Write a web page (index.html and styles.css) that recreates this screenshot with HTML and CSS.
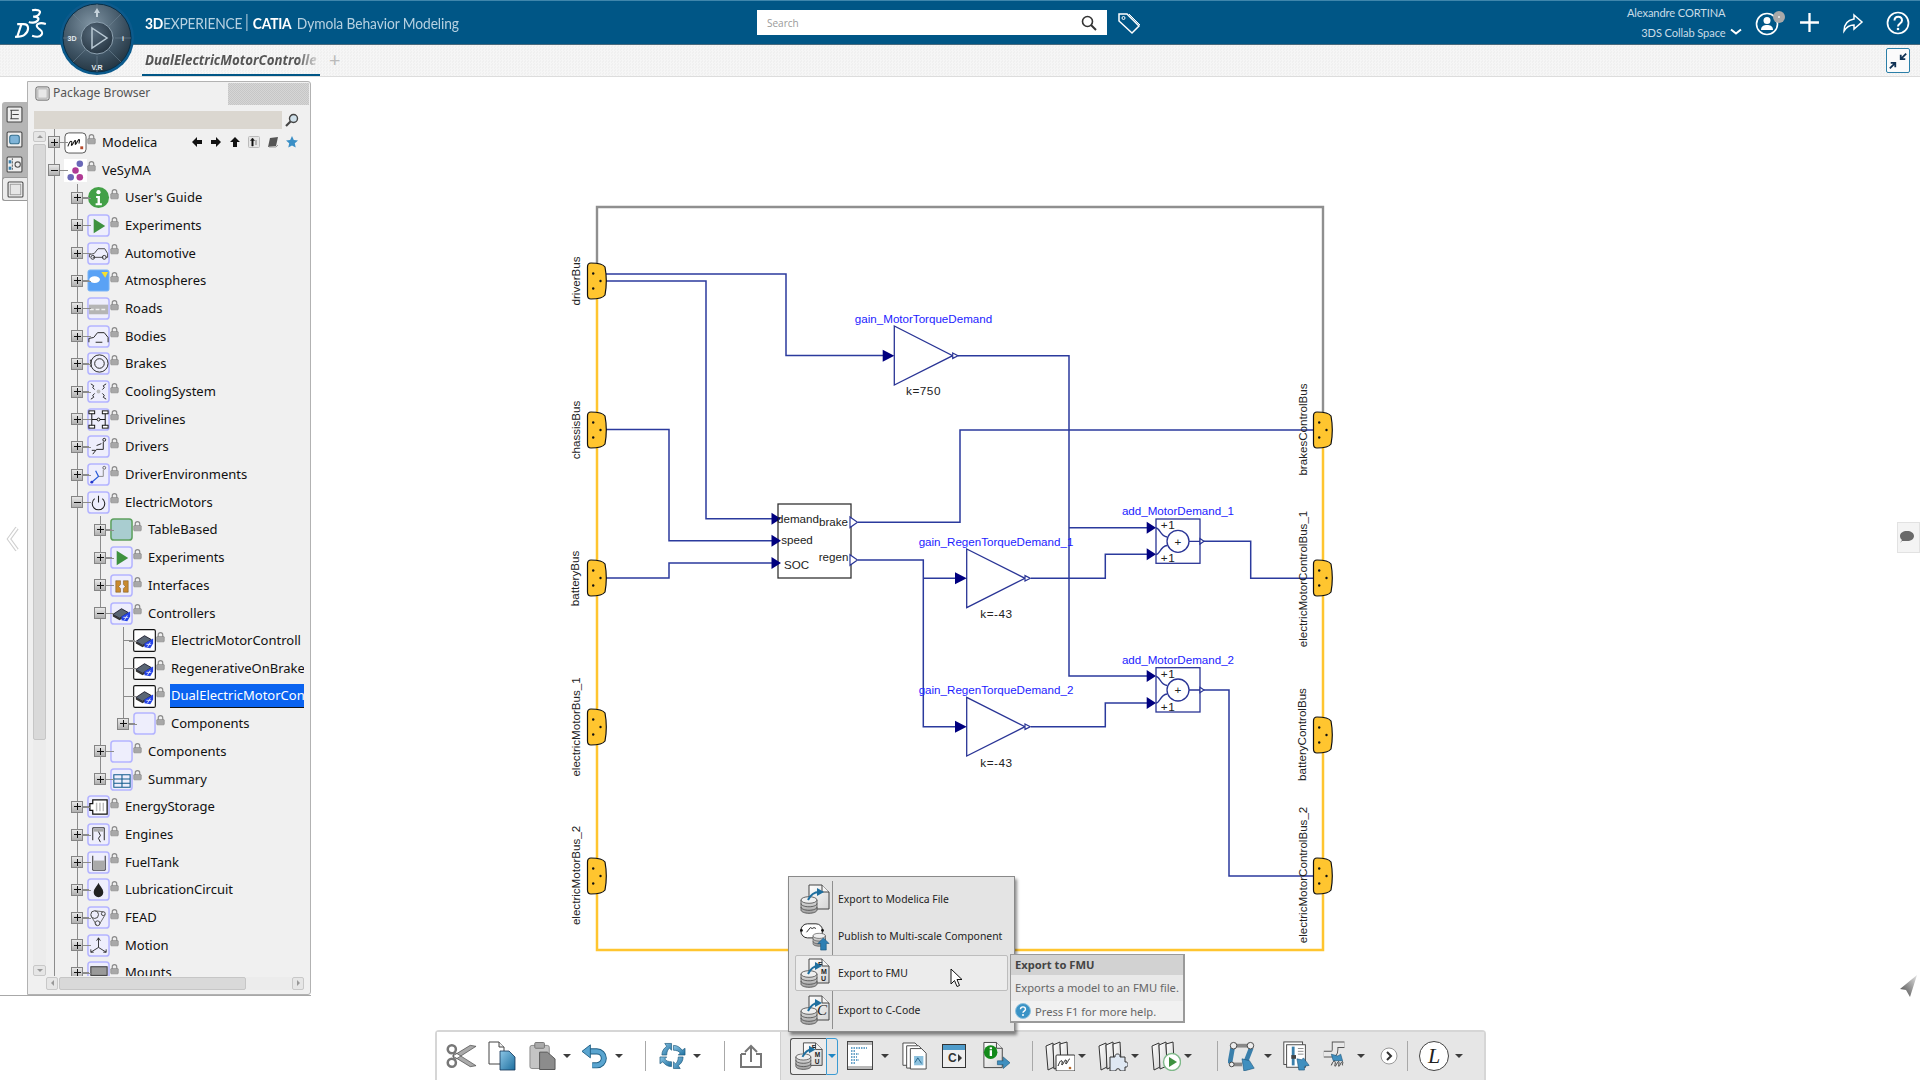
FILE: index.html
```html
<!DOCTYPE html>
<html lang="en">
<head>
<meta charset="utf-8">
<title>3DEXPERIENCE CATIA Dymola Behavior Modeling</title>
<link rel="stylesheet" href="styles.css">
</head>
<body>
<svg class="defs" aria-hidden="true">
<defs>
<linearGradient id="gBlue" x1="0" y1="0" x2="1" y2="1"><stop offset="0" stop-color="#8cc6e6"/><stop offset="1" stop-color="#1d6f9f"/></linearGradient>
<linearGradient id="gGrey" x1="0" y1="0" x2="0" y2="1"><stop offset="0" stop-color="#e2e2e2"/><stop offset="1" stop-color="#a0a0a0"/></linearGradient>
<linearGradient id="gDoc" x1="0" y1="0" x2="1" y2="1"><stop offset="0" stop-color="#fff"/><stop offset="1" stop-color="#d5d5d5"/></linearGradient>
<radialGradient id="gMetal" cx=".42" cy=".3" r=".8"><stop offset="0" stop-color="#7f93a2"/><stop offset=".6" stop-color="#3d5262"/><stop offset="1" stop-color="#1b2b36"/></radialGradient>
<radialGradient id="gHub" cx=".4" cy=".35" r=".8"><stop offset="0" stop-color="#56697a"/><stop offset="1" stop-color="#1f2e3a"/></radialGradient>
<linearGradient id="gTip" x1="1" y1="0" x2="0" y2="1"><stop offset="0" stop-color="#e4e4e4"/><stop offset="1" stop-color="#444"/></linearGradient>

<symbol id="lock" viewBox="0 0 10 12"><path d="M2.5 6V3.6a2.5 2.5 0 0 1 5 0V6" fill="none" stroke="#8a8a8a" stroke-width="1.3"/><rect x=".8" y="5.4" width="8.4" height="6" rx="1" fill="#a8a8a8" stroke="#7d7d7d" stroke-width=".6"/></symbol>
<symbol id="pk" viewBox="0 0 24 24"><rect x="1" y="1" width="22" height="22" rx="3" fill="#eeeefc" stroke="#b4b4ff" stroke-width="1.6"/></symbol>
<symbol id="i-modelica" viewBox="0 0 24 24"><rect x="1" y="2" width="22" height="21" rx="4" fill="#fff" stroke="#555"/><path d="M4 16c2-5 3-6 4-5s-1 4 0 4 3-6 4-5-1 4 0 4 3-6 4-5-1 4 0 4" fill="none" stroke="#111" stroke-width="1.1"/><rect x="17" y="16" width="3" height="3" fill="#b5482a"/></symbol>
<symbol id="i-vesyma" viewBox="0 0 24 24"><rect width="24" height="24" fill="#fff"/><circle cx="16.5" cy="5" r="3.4" fill="#6a68b8"/><circle cx="12" cy="12" r="3.4" fill="#b03a94"/><circle cx="7" cy="19" r="3.4" fill="#6a68b8"/><circle cx="16.5" cy="19" r="3.4" fill="#b03a94"/></symbol>
<symbol id="i-info" viewBox="0 0 24 24"><circle cx="12" cy="12" r="11" fill="#43a047"/><circle cx="12" cy="6.5" r="2.2" fill="#fff"/><path d="M9.5 10.5h4v7.5h2v2h-6.5v-2h2v-5.500h-1.500z" fill="#fff"/></symbol>
<symbol id="i-play" viewBox="0 0 24 24"><use href="#pk"/><path d="M7 5l12 7.500-12 7.500z" fill="#3e9140"/></symbol>
<symbol id="i-car" viewBox="0 0 24 24"><use href="#pk"/><path d="M2.500 16v-3l5-1 4-5h7l3 5v4h-2M6 16h11" fill="none" stroke="#333" stroke-width=".9"/><circle cx="6" cy="16" r="2" fill="none" stroke="#333"/><circle cx="18" cy="16" r="2" fill="none" stroke="#333"/></symbol>
<symbol id="i-atm" viewBox="0 0 24 24"><rect x="1" y="1" width="22" height="22" rx="2" fill="#5aa2f5" stroke="#7fb7f7"/><ellipse cx="8" cy="11" rx="5.500" ry="3.500" fill="#fff"/><path d="M15 3h7l-3 6z" fill="#f4e02e"/></symbol>
<symbol id="i-road" viewBox="0 0 24 24"><use href="#pk"/><rect x="2" y="8" width="20" height="10" fill="#b5b5b5"/><path d="M3 13h18" stroke="#eee" stroke-width="1.500" stroke-dasharray="4 2"/></symbol>
<symbol id="i-body" viewBox="0 0 24 24"><use href="#pk"/><path d="M2 18v-4l5-1 4-5h7l4 5v5M9 18h7" fill="none" stroke="#222" stroke-width="1"/></symbol>
<symbol id="i-brake" viewBox="0 0 24 24"><use href="#pk"/><circle cx="13" cy="12" r="9" fill="none" stroke="#222"/><circle cx="13" cy="12" r="5" fill="none" stroke="#222"/><path d="M4 8v8" stroke="#222" stroke-width="2" stroke-dasharray="1 1"/></symbol>
<symbol id="i-cool" viewBox="0 0 24 24"><use href="#pk"/><path d="M4 4l3 2-1 2 2 2M20 4l-3 2 1 2-2 2M4 20l3-2-1-2 2-2M20 20l-3-2 1-2-2-2" fill="none" stroke="#222"/><circle cx="12" cy="12" r="2" fill="#bbb"/></symbol>
<symbol id="i-drive" viewBox="0 0 24 24"><use href="#pk"/><g fill="#fff" stroke="#111"><rect x="2" y="3" width="6" height="3"/><rect x="16" y="3" width="6" height="3"/><rect x="2" y="18" width="6" height="3"/><rect x="16" y="18" width="6" height="3"/></g><path d="M5 6v12M19 6v12M5 12h14" stroke="#111"/><circle cx="12" cy="12" r="1.500" fill="#fff" stroke="#111"/></symbol>
<symbol id="i-driver" viewBox="0 0 24 24"><use href="#pk"/><circle cx="18" cy="5" r="1.500" fill="none" stroke="#222"/><path d="M17 7v8h-7l-4 5M15 9l-5 2M5 16h4" fill="none" stroke="#222"/></symbol>
<symbol id="i-env" viewBox="0 0 24 24"><use href="#pk"/><circle cx="18" cy="5" r="1.500" fill="none" stroke="#666"/><path d="M17 7v7h-5" fill="none" stroke="#888"/><path d="M9 8l3 6-7 6" fill="none" stroke="#2b5cd8" stroke-width="1.300"/><circle cx="5" cy="20" r="1.500" fill="#2233cc"/></symbol>
<symbol id="i-power" viewBox="0 0 24 24"><use href="#pk"/><path d="M8 8a6.500 6.500 0 1 0 8 0M12 5v7" fill="none" stroke="#222" stroke-width="1.100"/></symbol>
<symbol id="i-table" viewBox="0 0 24 24"><rect x="1" y="1" width="22" height="22" rx="3" fill="#a9cdd0" stroke="#5da05e" stroke-width="1.600"/></symbol>
<symbol id="i-iface" viewBox="0 0 24 24"><use href="#pk"/><path d="M6 7h5v4l-2 2 2 2v4H6zM14 7h5v12h-5v-4l2-2-2-2z" fill="#c98a2f" stroke="#6e4a10" stroke-width=".5"/></symbol>
<symbol id="chip" viewBox="0 0 24 24"><path d="M3 13l9-6 7 4-9 6z" fill="#5a6674" stroke="#223"/><path d="M3 13v2l7 4v-2zM10 17v2l9-6v-2z" fill="#333"/><path d="M12 15l9-5v5l-3 5-6-1z" fill="#2442e6"/><path d="M14 16h5M15 19l3-5" stroke="#fff" stroke-width=".8"/></symbol>
<symbol id="i-ctrl" viewBox="0 0 24 24"><use href="#pk"/><use href="#chip"/></symbol>
<symbol id="i-ctrl2" viewBox="0 0 24 24"><rect x=".7" y=".7" width="22.600" height="22.600" rx="1.500" fill="#fff" stroke="#111" stroke-width="1.200"/><use href="#chip"/></symbol>
<symbol id="i-empty" viewBox="0 0 24 24"><use href="#pk"/></symbol>
<symbol id="i-sum" viewBox="0 0 24 24"><use href="#pk"/><path d="M4 7h17v13H4zM4 11.500h17M4 16h17M12.500 7v13" fill="none" stroke="#0f5a8c" stroke-width="1.100"/></symbol>
<symbol id="i-energy" viewBox="0 0 24 24"><use href="#pk"/><path d="M6 5h15v15H6v-4H3V9h3z" fill="#fff" stroke="#111" stroke-width="1.300"/><path d="M10 8v9M13.500 8v9M17 8v9" stroke="#bbb" stroke-width="1.500"/></symbol>
<symbol id="i-engine" viewBox="0 0 24 24"><use href="#pk"/><path d="M6 5v13M18 5v13M6 5h12" fill="none" stroke="#222"/><rect x="7" y="6" width="10" height="3" fill="#aaa"/><path d="M12 9l2 4-2 3 2 4" fill="none" stroke="#222"/></symbol>
<symbol id="i-fuel" viewBox="0 0 24 24"><use href="#pk"/><path d="M6 5v15h13V5" fill="none" stroke="#222"/><rect x="6.500" y="10" width="12" height="9.500" fill="#aaa"/></symbol>
<symbol id="i-lub" viewBox="0 0 24 24"><use href="#pk"/><path d="M12 5c1 3 5 6 5 10a5 5 0 0 1-10 0c0-4 4-7 5-10z" fill="#222"/></symbol>
<symbol id="i-fead" viewBox="0 0 24 24"><use href="#pk"/><circle cx="8" cy="9" r="4" fill="none" stroke="#444"/><circle cx="17" cy="8" r="2" fill="none" stroke="#444"/><circle cx="11" cy="18" r="2.500" fill="none" stroke="#444"/><path d="M8 5l9 1M4 10l6 10M19 9l-6 10" stroke="#666" fill="none"/></symbol>
<symbol id="i-motion" viewBox="0 0 24 24"><use href="#pk"/><path d="M12 4v10l-8 5M12 14l8 5M10 7l2-3 2 3M4 16v3h3M20 16v3h-3" fill="none" stroke="#222" stroke-width=".9"/></symbol>
<symbol id="i-mount" viewBox="0 0 24 24"><use href="#pk"/><rect x="4" y="6" width="17" height="9" fill="#9a9a9a" stroke="#333"/></symbol>

<symbol id="db" viewBox="0 0 18 18"><path d="M1 4v10c0 1.800 3.500 3.300 8 3.300s8-1.500 8-3.300V4z" fill="url(#gGrey)" stroke="#444" stroke-width=".8"/><ellipse cx="9" cy="4" rx="8" ry="3.300" fill="#efefef" stroke="#444" stroke-width=".8"/><path d="M1 7.500c0 1.800 3.500 3.300 8 3.300s8-1.500 8-3.300M1 11c0 1.800 3.500 3.300 8 3.300s8-1.500 8-3.300" fill="none" stroke="#444" stroke-width=".8"/></symbol>
<symbol id="fdoc" viewBox="0 0 22 26"><path d="M1 1h13l7 7v17H1z" fill="url(#gDoc)" stroke="#444"/><path d="M14 1v7h7" fill="#f5f5f5" stroke="#444"/></symbol>
<symbol id="ex-mo" viewBox="0 0 30 32"><use href="#fdoc" x="8" y="1" width="22" height="26"/><use href="#db" x="0" y="13" width="18" height="18"/><path d="M8 17c3-6 7-8 11-8" fill="none" stroke="#1f6f9f" stroke-width="2"/><path d="M17 5l7 4-7 4z" fill="#1f6f9f"/></symbol>
<symbol id="ex-fmu" viewBox="0 0 30 32"><use href="#fdoc" x="8" y="1" width="22" height="26"/><text x="18" y="10" class="fmu">F</text><text x="21" y="17" class="fmu">M</text><text x="21" y="24" class="fmu">U</text><use href="#db" x="0" y="13" width="18" height="18"/><path d="M8 17c3-6 6-8 10-8" fill="none" stroke="#1f6f9f" stroke-width="2"/><path d="M15 5l7 4-7 4z" fill="#1f6f9f"/></symbol>
<symbol id="ex-c" viewBox="0 0 30 32"><use href="#fdoc" x="8" y="1" width="22" height="26"/><text x="17" y="21" class="cc">C</text><use href="#db" x="0" y="13" width="18" height="18"/><path d="M8 17c3-6 6-8 10-8" fill="none" stroke="#1f6f9f" stroke-width="2"/><path d="M15 5l7 4-7 4z" fill="#1f6f9f"/></symbol>
<symbol id="ex-pub" viewBox="0 0 32 32"><rect x="1" y="3" width="23" height="15" rx="7" fill="#fff" stroke="#222"/><circle cx="1.500" cy="10" r="1.500" fill="#111"/><circle cx="24" cy="10" r="1.500" fill="#111"/><path d="M7 12l4-5 2 1 2-1 2 1" fill="none" stroke="#222"/><use href="#db" x="13" y="12" width="15" height="16"/><path d="M25 18l6 6h-3v7h-6v-7h-3z" fill="#2d7fb3" stroke="#134f75" stroke-width=".6"/></symbol>

<symbol id="t-cut" viewBox="0 0 32 28"><path d="M9 10L31 24l-6 1L7 14zM9 18L31 4l-6-1L7 14z" fill="#aaa" stroke="#555" stroke-width=".8"/><circle cx="6" cy="7" r="4.200" fill="none" stroke="#777" stroke-width="2.600"/><circle cx="6" cy="21" r="4.200" fill="none" stroke="#777" stroke-width="2.600"/></symbol>
<symbol id="t-copy" viewBox="0 0 28 30"><path d="M1 1h10l5 5v17H1z" fill="#fff" stroke="#444"/><path d="M11 1v5h5" fill="#eee" stroke="#444"/><path d="M12 10h9l6 6v13H12z" fill="url(#gBlue)" stroke="#135" stroke-width=".8"/></symbol>
<symbol id="t-paste" viewBox="0 0 28 30"><rect x="1" y="4" width="20" height="24" rx="2" fill="#c4c4c4" stroke="#888"/><rect x="6" y="1" width="10" height="6" rx="1" fill="#aaa" stroke="#777"/><path d="M11 11h8l8 7v11H11z" fill="#8c8c8c" stroke="#555"/></symbol>
<symbol id="t-undo" viewBox="0 0 28 28"><path d="M6 9h10a7 7 0 0 1 0 15h-5" fill="none" stroke="#1f5f85" stroke-width="6.500"/><path d="M6 9h10a7 7 0 0 1 0 15h-5" fill="none" stroke="#5aa5d0" stroke-width="4.500"/><path d="M0 9l9-7v14z" fill="#5aa5d0" stroke="#1f5f85"/></symbol>
<symbol id="t-sync" viewBox="0 0 28 28"><g fill="url(#gBlue)" stroke="#1d5a7e" stroke-width=".7"><path d="M3 13C3 9 5 6 8 4L6 1h7v7l-2-2c-2 1-3 4-3 7z"/><path d="M15 3c4 0 7 2 9 5l3-2v7h-7l2-2c-1-2-4-3-7-3z"/><path d="M25 15c0 4-2 7-5 9l2 3h-7v-7l2 2c2-1 3-4 3-7z"/><path d="M13 25c-4 0-7-2-9-5l-3 2v-7h7l-2 2c1 2 4 3 7 3z"/></g></symbol>
<symbol id="t-share" viewBox="0 0 22 24"><path d="M1 10v13h20V10h-5M1 10h5" fill="none" stroke="#777" stroke-width="2"/><path d="M11 18V3M5 8l6-6 6 6" fill="none" stroke="#777" stroke-width="2"/></symbol>
<symbol id="t-list" viewBox="0 0 26 30"><rect x=".5" y=".5" width="25" height="28" fill="#fff" stroke="#444"/><rect x="1" y="1" width="24" height="3" fill="#b9b9b9"/><rect x="1" y="25" width="24" height="3" fill="#b9b9b9"/><path d="M4 7h16M4 10h5M4 13h8M4 16h6M4 19h8M4 22h5" stroke="#3b87b8" stroke-width="1.400" stroke-dasharray="1.500 1"/></symbol>
<symbol id="t-pages" viewBox="0 0 28 30"><path d="M1 1h13l4 4v20H1z" fill="#fff" stroke="#444"/><path d="M5 4h13l4 4v20H5z" fill="#fff" stroke="#444"/><path d="M9 7h12l5 5v17H9z" fill="#fff" stroke="#444"/><rect x="13" y="15" width="10" height="10" fill="#8cc1de"/><path d="M14 22l3-5 4 6" stroke="#1f5f85" fill="none"/></symbol>
<symbol id="t-cwin" viewBox="0 0 24 24"><rect x=".5" y=".5" width="23" height="23" fill="#eee" stroke="#333"/><rect x="1" y="1" width="22" height="5" fill="#4f9ccb"/><text x="6" y="18" class="cw">C</text><path d="M16 10l4 4-4 4z" fill="#333"/></symbol>
<symbol id="t-info" viewBox="0 0 30 30"><path d="M3 1h13l6 6v20H3z" fill="url(#gDoc)" stroke="#444"/><path d="M16 1v6h6" fill="#eee" stroke="#444"/><circle cx="10" cy="11" r="7" fill="#138a1a"/><rect x="9" y="9" width="2.400" height="6" fill="#fff"/><rect x="9" y="6" width="2.400" height="2" fill="#fff"/><path d="M17 20h6v-4l7 6-7 6v-4h-6z" fill="#3f8fbf" stroke="#134f75" stroke-width=".6"/></symbol>
<symbol id="books" viewBox="0 0 30 30"><g fill="url(#gDoc)" stroke="#333"><path d="M1 5l7-3 1 24-6 3z"/><path d="M8 4l7-3 1 24-7 3z"/><path d="M15 3l7-2 1 20-7 4z"/></g></symbol>
<symbol id="t-libm" viewBox="0 0 30 30"><use href="#books"/><rect x="11" y="14" width="19" height="16" rx="1" fill="#fff" stroke="#333"/><path d="M13 25c2-5 3-6 4-5s-1 4 0 4 3-6 4-5-1 4 0 4 3-6 4-5" fill="none" stroke="#111"/><circle cx="25" cy="27" r="1.300" fill="#b5682a"/></symbol>
<symbol id="t-libp" viewBox="0 0 30 30"><use href="#books"/><path d="M12 16h5c-1-4 6-4 5 0h5v5c4-1 4 6 0 5v4h-5c1-3-5-3-4 0h-6z" fill="#dfe8f3" stroke="#333"/></symbol>
<symbol id="t-libr" viewBox="0 0 30 30"><use href="#books"/><circle cx="21" cy="21" r="8.500" fill="#fff" stroke="#7fb98a" stroke-width="1.400"/><path d="M18 16l8 5-8 5z" fill="#3e9140"/></symbol>
<symbol id="t-mech" viewBox="0 0 28 32"><path d="M4 7L1 24M24 7l-7 18" stroke="#3a7fab" stroke-width="5"/><path d="M5 5h18" stroke="#888" stroke-width="4"/><circle cx="5" cy="5" r="3.500" fill="#eee" stroke="#444"/><circle cx="23" cy="5" r="3.500" fill="#eee" stroke="#444"/><path d="M3 25h11" stroke="#888" stroke-width="4"/><circle cx="3" cy="25" r="2.500" fill="#eee" stroke="#444"/><path d="M14 19l8 2 5 8-11 3z" fill="#3f8fbf" stroke="#134f75" stroke-width=".6"/></symbol>
<symbol id="t-param" viewBox="0 0 28 32"><rect x="1" y="1" width="20" height="24" fill="#fff" stroke="#444"/><rect x="4" y="4" width="20" height="24" fill="#fff" stroke="#444"/><path d="M11 6v20" stroke="#3a7fab" stroke-width="3"/><rect x="9" y="15" width="5" height="4" fill="#444"/><path d="M16 8h6M16 11h6M16 14h6" stroke="#888"/><path d="M15 19l5 1 2-2 6 8-5 1v4h-6z" fill="#3f8fbf" stroke="#134f75" stroke-width=".6"/></symbol>
<symbol id="t-pipe" viewBox="0 0 30 32"><path d="M2 14h8c3 0 4-2 4-5V4h10" fill="none" stroke="#555" stroke-width="7"/><path d="M2 14h8c3 0 4-2 4-5V4h10" fill="none" stroke="#e8e8e8" stroke-width="5"/><path d="M10 14l7 2 3-2 2 7h-10z" fill="#3f8fbf" stroke="#134f75" stroke-width=".6"/><path d="M10 26c2-5 3-5 4-4s-1 5 0 5 3-6 4-5-1 5 0 5 3-6 4-5-1 4 0 4" fill="none" stroke="#333"/></symbol>
</defs>
</svg>

<div class="app">
  <header class="topbar">
    <div class="left">
      <svg class="logo" viewBox="0 0 32 28"><path d="M17 2c4-1 9 0 7 3-1 2-4 3-6 3 5 0 6 2 4 4-2 2-6 2-8 1M3 15h6c6 0 5 7 1 10-2 2-6 2-9 2M7 15L3 27M30 15c-6-2-10 0-8 3s6 3 4 7c-2 3-6 2-9 1" fill="none" stroke="#fff" stroke-width="2"/></svg>
      <div class="brand"><b>3D</b>EXPERIENCE<span class="bar"></span><b>CATIA</b><span class="app-name">Dymola Behavior Modeling</span></div>
    </div>
    <div class="search"><span class="ph">Search</span>
      <svg class="mag" viewBox="0 0 16 16"><circle cx="6.500" cy="6.500" r="5" fill="none" stroke="#333" stroke-width="1.600"/><path d="M10 10l5 5" stroke="#333" stroke-width="2"/></svg>
    </div>
    <svg class="tag" viewBox="0 0 24 24"><path d="M2 10V3h8l12 12-7 7z" fill="none" stroke="#fff" stroke-width="1.500"/><circle cx="6.500" cy="7" r="1.500" fill="none" stroke="#fff"/><path d="M12 3l11 11" stroke="#fff"/></svg>
    <div class="right">
      <div class="user"><div>Alexandre CORTINA</div><div>3DS Collab Space</div></div>
      <svg class="chev" viewBox="0 0 12 8"><path d="M1 1.500l5 4 5-4" fill="none" stroke="#fff" stroke-width="2"/></svg>
      <svg class="avatar" viewBox="0 0 32 26"><circle cx="12" cy="14" r="10.500" fill="none" stroke="#fff" stroke-width="1.600"/><circle cx="12" cy="10.500" r="3.500" fill="#fff"/><path d="M6 20c0-4 3-5 6-5s6 1 6 5z" fill="#fff"/><circle cx="24" cy="7" r="6" fill="#a9a9a9"/><circle cx="24" cy="7" r="1" fill="#eee"/></svg>
      <svg class="ti plus" viewBox="0 0 20 20"><path d="M10 1v18M1 10h18" stroke="#fff" stroke-width="2.200"/></svg>
      <svg class="ti share" viewBox="0 0 22 22"><path d="M12 3l8 7-8 7v-4c-4 0-7 1-10 6 0-7 4-11 10-12z" fill="none" stroke="#fff" stroke-width="1.500"/></svg>
      <svg class="ti help" viewBox="0 0 24 24"><circle cx="12" cy="12" r="10.500" fill="none" stroke="#fff" stroke-width="1.700"/><path d="M8.500 9.500c0-5 7.500-5 7.500 0 0 3-4 3-4 6" fill="none" stroke="#fff" stroke-width="2"/><circle cx="12" cy="18" r="1.300" fill="#fff"/></svg>
    </div>
  </header>

  <svg class="compass" viewBox="0 0 76 76">
    <circle cx="38" cy="38" r="37" fill="#0b5a8c"/>
    <circle cx="38" cy="38" r="34" fill="url(#gMetal)" stroke="#0a2f47"/>
    <path d="M38 4v16M38 56v16M4 38h16M56 38h16M14 14l12 12M62 14L50 26M14 62l12-12M62 62L50 50" stroke="#6f8494" stroke-width=".6"/>
    <circle cx="38" cy="38" r="16" fill="url(#gHub)" stroke="#8ea2b1" stroke-width="1"/>
    <path d="M33 28l15 10-15 10z" fill="none" stroke="#b9c9d4" stroke-width="1.500"/>
    <text x="38" y="70" class="ct">V.R</text>
    <text x="13" y="41" class="ct">3D</text>
    <text x="64" y="41" class="ct">i</text>
    <path d="M38 8l-3 5h2v4h2v-4h2z" fill="#c5d2db"/>
  </svg>

  <div class="subbar">
    <div class="tab"><span class="tab-text">DualElectricMotorControlle</span></div>
    <span class="tab-add">+</span>
    <div class="collapse"><svg viewBox="0 0 22 22"><path d="M20 3l-6 6M14 4v5h5" fill="none" stroke="#135" stroke-width="2"/><path d="M2 19l6-6M8 18v-5H3" fill="none" stroke="#135" stroke-width="2"/></svg></div>
  </div>

  <main class="work">
    <aside class="sidebar">
      <div class="rail">
        <div class="railtabs">
          <div class="rt"><svg viewBox="0 0 16 16"><rect x="1" y="1" width="14" height="14" rx="1" fill="#eee" stroke="#444"/><path d="M4 4h8M6 8h6M4 12h8M5 4v8" stroke="#444" fill="none"/></svg></div>
          <div class="rt"><svg viewBox="0 0 16 16"><rect x="1" y="1" width="14" height="14" rx="1" fill="#eee" stroke="#444"/><rect x="3.500" y="4" width="9" height="8" rx="2" fill="#7fb4d8" stroke="#36708f"/></svg></div>
          <div class="rt"><svg viewBox="0 0 16 16"><rect x="1" y="1" width="14" height="14" rx="1" fill="#eee" stroke="#444"/><path d="M6 2v12" stroke="#666" stroke-dasharray="2 1"/><rect x="2.500" y="4" width="2.500" height="3" fill="#3a7fab"/><rect x="2.500" y="10" width="2.500" height="3" fill="#3a7fab"/><circle cx="11" cy="8" r="2.500" fill="none" stroke="#555"/></svg></div>
          <div class="rt on"><svg viewBox="0 0 16 16"><rect x="1" y="1" width="14" height="14" rx="1" fill="#fff" stroke="#444"/><rect x="3" y="3" width="10" height="10" fill="#e6e6e6" stroke="#999"/></svg></div>
        </div>
        <svg class="collapse-left" viewBox="0 0 14 26"><path d="M11 2L3 13l8 11" fill="none" stroke="#cfcfcf" stroke-width="4"/><path d="M11 2L3 13l8 11" fill="none" stroke="#fff" stroke-width="2"/></svg>
      </div>
      <section class="panel">
        <div class="phead">
          <svg class="pcheck" viewBox="0 0 16 16"><rect x="1" y="1" width="14" height="14" rx="2" fill="#fafafa" stroke="#555"/><rect x="3" y="3" width="10" height="10" fill="#e8e8e8" stroke="#aaa"/></svg>
          <span class="ptitle">Package Browser</span>
          <div class="pgrip"></div>
        </div>
        <div class="psearch"><div class="pfield"></div>
          <svg class="pmag" viewBox="0 0 14 14"><circle cx="8.500" cy="5.500" r="4" fill="#cfe0ea" stroke="#444" stroke-width="1.400"/><path d="M5.500 8.500L1 13" stroke="#444" stroke-width="2.200"/></svg>
        </div>
        <div class="pbody">
          <div class="vscroll"><i class="sb-btn"><b class="up"></b></i><i class="sb-thumb"></i><i class="sb-fill"></i><i class="sb-btn"><b class="dn"></b></i></div>
          <div class="tree">
            <div class="row"><i class="x p"></i><svg class="ico"><use href="#i-modelica"/></svg><svg class="lock"><use href="#lock"/></svg><span class="t">Modelica</span>
              <div class="navs">
                <svg viewBox="0 0 12 12"><path d="M1 6l5-5v3h5v4H6v3z" fill="#111"/></svg>
                <svg viewBox="0 0 12 12"><path d="M11 6L6 1v3H1v4h5v3z" fill="#111"/></svg>
                <svg viewBox="0 0 12 12"><path d="M6 1l5 5H8v5H4V6H1z" fill="#111"/></svg>
                <svg viewBox="0 0 12 12"><rect x=".5" y=".5" width="11" height="11" rx="1" fill="#e6e6e6" stroke="#bbb"/><path d="M4.500 2l2 2.500h-1.300V10H3.800V4.500H2.500zM8 4v5" stroke="#111" fill="#111" stroke-width=".5"/></svg>
                <svg viewBox="0 0 12 12"><path d="M1 11l2-9 8-1-2 9z" fill="#555"/><path d="M2 11h7l2-2" stroke="#999" fill="none"/></svg>
                <svg viewBox="0 0 12 12"><path d="M6 0l1.800 4 4.200.4-3.200 2.900.9 4.200L6 9.400l-3.700 2.100.9-4.200L0 4.400 4.200 4z" fill="#3a8fc6"/></svg>
              </div>
            </div>
            <div class="row"><i class="x m"></i><svg class="ico"><use href="#i-vesyma"/></svg><svg class="lock"><use href="#lock"/></svg><span class="t">VeSyMA</span></div>
            <div class="row"><i class="g"></i><i class="x p"></i><svg class="ico"><use href="#i-info"/></svg><svg class="lock"><use href="#lock"/></svg><span class="t">User's Guide</span></div>
            <div class="row"><i class="g"></i><i class="x p"></i><svg class="ico"><use href="#i-play"/></svg><svg class="lock"><use href="#lock"/></svg><span class="t">Experiments</span></div>
            <div class="row"><i class="g"></i><i class="x p"></i><svg class="ico"><use href="#i-car"/></svg><svg class="lock"><use href="#lock"/></svg><span class="t">Automotive</span></div>
            <div class="row"><i class="g"></i><i class="x p"></i><svg class="ico"><use href="#i-atm"/></svg><svg class="lock"><use href="#lock"/></svg><span class="t">Atmospheres</span></div>
            <div class="row"><i class="g"></i><i class="x p"></i><svg class="ico"><use href="#i-road"/></svg><svg class="lock"><use href="#lock"/></svg><span class="t">Roads</span></div>
            <div class="row"><i class="g"></i><i class="x p"></i><svg class="ico"><use href="#i-body"/></svg><svg class="lock"><use href="#lock"/></svg><span class="t">Bodies</span></div>
            <div class="row"><i class="g"></i><i class="x p"></i><svg class="ico"><use href="#i-brake"/></svg><svg class="lock"><use href="#lock"/></svg><span class="t">Brakes</span></div>
            <div class="row"><i class="g"></i><i class="x p"></i><svg class="ico"><use href="#i-cool"/></svg><svg class="lock"><use href="#lock"/></svg><span class="t">CoolingSystem</span></div>
            <div class="row"><i class="g"></i><i class="x p"></i><svg class="ico"><use href="#i-drive"/></svg><svg class="lock"><use href="#lock"/></svg><span class="t">Drivelines</span></div>
            <div class="row"><i class="g"></i><i class="x p"></i><svg class="ico"><use href="#i-driver"/></svg><svg class="lock"><use href="#lock"/></svg><span class="t">Drivers</span></div>
            <div class="row"><i class="g"></i><i class="x p"></i><svg class="ico"><use href="#i-env"/></svg><svg class="lock"><use href="#lock"/></svg><span class="t">DriverEnvironments</span></div>
            <div class="row"><i class="g"></i><i class="x m"></i><svg class="ico"><use href="#i-power"/></svg><svg class="lock"><use href="#lock"/></svg><span class="t">ElectricMotors</span></div>
            <div class="row"><i class="g"></i><i class="g"></i><i class="x p"></i><svg class="ico"><use href="#i-table"/></svg><svg class="lock"><use href="#lock"/></svg><span class="t">TableBased</span></div>
            <div class="row"><i class="g"></i><i class="g"></i><i class="x p"></i><svg class="ico"><use href="#i-play"/></svg><svg class="lock"><use href="#lock"/></svg><span class="t">Experiments</span></div>
            <div class="row"><i class="g"></i><i class="g"></i><i class="x p"></i><svg class="ico"><use href="#i-iface"/></svg><svg class="lock"><use href="#lock"/></svg><span class="t">Interfaces</span></div>
            <div class="row"><i class="g"></i><i class="g"></i><i class="x m"></i><svg class="ico"><use href="#i-ctrl"/></svg><svg class="lock"><use href="#lock"/></svg><span class="t">Controllers</span></div>
            <div class="row"><i class="g"></i><i class="g"></i><i class="g"></i><i class="x"></i><svg class="ico"><use href="#i-ctrl2"/></svg><svg class="lock"><use href="#lock"/></svg><span class="t">ElectricMotorControll</span></div>
            <div class="row"><i class="g"></i><i class="g"></i><i class="g"></i><i class="x"></i><svg class="ico"><use href="#i-ctrl2"/></svg><svg class="lock"><use href="#lock"/></svg><span class="t">RegenerativeOnBrake</span></div>
            <div class="row"><i class="g"></i><i class="g"></i><i class="g"></i><i class="x"></i><svg class="ico"><use href="#i-ctrl2"/></svg><svg class="lock"><use href="#lock"/></svg><span class="t sel">DualElectricMotorCon</span></div>
            <div class="row"><i class="g"></i><i class="g"></i><i class="g"></i><i class="x p last"></i><svg class="ico"><use href="#i-empty"/></svg><svg class="lock"><use href="#lock"/></svg><span class="t">Components</span></div>
            <div class="row"><i class="g"></i><i class="g"></i><i class="x p"></i><svg class="ico"><use href="#i-empty"/></svg><svg class="lock"><use href="#lock"/></svg><span class="t">Components</span></div>
            <div class="row"><i class="g"></i><i class="g"></i><i class="x p last"></i><svg class="ico"><use href="#i-sum"/></svg><svg class="lock"><use href="#lock"/></svg><span class="t">Summary</span></div>
            <div class="row"><i class="g"></i><i class="x p"></i><svg class="ico"><use href="#i-energy"/></svg><svg class="lock"><use href="#lock"/></svg><span class="t">EnergyStorage</span></div>
            <div class="row"><i class="g"></i><i class="x p"></i><svg class="ico"><use href="#i-engine"/></svg><svg class="lock"><use href="#lock"/></svg><span class="t">Engines</span></div>
            <div class="row"><i class="g"></i><i class="x p"></i><svg class="ico"><use href="#i-fuel"/></svg><svg class="lock"><use href="#lock"/></svg><span class="t">FuelTank</span></div>
            <div class="row"><i class="g"></i><i class="x p"></i><svg class="ico"><use href="#i-lub"/></svg><svg class="lock"><use href="#lock"/></svg><span class="t">LubricationCircuit</span></div>
            <div class="row"><i class="g"></i><i class="x p"></i><svg class="ico"><use href="#i-fead"/></svg><svg class="lock"><use href="#lock"/></svg><span class="t">FEAD</span></div>
            <div class="row"><i class="g"></i><i class="x p"></i><svg class="ico"><use href="#i-motion"/></svg><svg class="lock"><use href="#lock"/></svg><span class="t">Motion</span></div>
            <div class="row"><i class="g"></i><i class="x p"></i><svg class="ico"><use href="#i-mount"/></svg><svg class="lock"><use href="#lock"/></svg><span class="t">Mounts</span></div>
          </div>
        </div>
        <div class="hscroll"><i class="sb-btn"><b class="lf"></b></i><i class="sb-thumb"></i><i class="sb-fill"></i><i class="sb-btn"><b class="rg"></b></i></div>
      </section>
    </aside>

    <div class="canvas">
      <svg class="diagram" viewBox="311 77 1609 1003">
        <path class="fr-grey" d="M597 263V207H1323V412"/>
        <path class="fr-yel" d="M597 299V950H1323V448"/>
        <g class="wire">
          <path d="M606 274H786V355.500H883"/>
          <path d="M606 281H706V518.700H772"/>
          <path d="M606 429.500H669V540.700H772"/>
          <path d="M606 578H669V563H772"/>
          <path d="M858 522.300H960V430H1314"/>
          <path d="M858 560H923.300V726.700H955M923.300 578.300H955"/>
          <path d="M958 355.700H1069V676H1147M1069 527.700H1147"/>
          <path d="M1031 578.300H1105.300V554.300H1147"/>
          <path d="M1031 726.700H1105.300V703H1147"/>
          <path d="M1204 541.300H1250.700V578.300H1314"/>
          <path d="M1204 690H1229V876H1314"/>
        </g>
        <g class="block">
          <rect class="blk" x="778" y="504" width="73" height="74"/>
          <path d="M894.300 326V385L952.700 355.700Z"/>
          <path d="M966.700 549V607.700L1025 578.300Z"/>
          <path d="M966.700 697.300V756L1025 726.700Z"/>
          <rect x="1156" y="519" width="44" height="44.300"/>
          <rect x="1156" y="667.700" width="44" height="44.300"/>
          <circle cx="1178" cy="541.300" r="11"/>
          <circle cx="1178" cy="690" r="11"/>
          <path d="M1156 528c4 0 4 8 11 9M1156 554.500c4 0 4-8 11-9M1189 541.300h11"/>
          <path d="M1156 676.500c4 0 4 8 11 9M1156 703c4 0 4-8 11-9M1189 690h11"/>
        </g>
        <g class="arrow">
          <path d="M771.500 512.700l9.500 6-9.500 6zM771.500 534.700l9.500 6-9.500 6zM771.500 557l9.500 6-9.500 6z"/>
          <path d="M882.700 349.700l11.600 6-11.600 6zM955 572.300l11.700 6-11.700 6zM955 720.700l11.700 6-11.700 6z"/>
          <path d="M1146.700 521.700l9.300 6-9.300 6zM1146.700 548.300l9.300 6-9.300 6zM1146.700 670l9.300 6-9.300 6zM1146.700 697l9.300 6-9.300 6z"/>
        </g>
        <g class="hollow">
          <path d="M850 517l7.500 5.300-7.500 5.300zM850 554.700l7.500 5.300-7.500 5.300z"/>
          <path d="M952.700 353l5.300 2.700-5.300 2.700zM1025 575.600l5.300 2.700-5.300 2.700zM1025 724l5.300 2.700-5.300 2.700zM1200 538.600l4 2.700-4 2.700zM1200 687.300l4 2.700-4 2.700z"/>
        </g>
        <g class="port">
          <g transform="translate(597 281)"><use href="#portshape"/></g>
          <g transform="translate(597 430)"><use href="#portshape"/></g>
          <g transform="translate(597 578)"><use href="#portshape"/></g>
          <g transform="translate(597 727)"><use href="#portshape"/></g>
          <g transform="translate(597 876)"><use href="#portshape"/></g>
          <g transform="translate(1323 430)"><use href="#portshape"/></g>
          <g transform="translate(1323 578)"><use href="#portshape"/></g>
          <g transform="translate(1323 735)"><use href="#portshape"/></g>
          <g transform="translate(1323 876)"><use href="#portshape"/></g>
        </g>
        <defs>
          <g id="portshape">
            <path d="M-6-18C-1-18 6-17 8-14C9.500-6 9.500 6 8 14C6 17-1 18-6 18C-8.500 18-9.500 16-9.500 14V-14C-9.500-16-8.500-18-6-18Z" fill="#ffc52f" stroke="#111" stroke-width="1.200"/>
            <circle cx="-3.800" cy="-7.500" r="1.200" fill="#111"/><circle cx="3.500" cy="0" r="1.200" fill="#111"/><circle cx="-3.800" cy="7.500" r="1.200" fill="#111"/>
          </g>
        </defs>
        <g class="lb-blue">
          <text x="923.500" y="323">gain_MotorTorqueDemand</text>
          <text x="996" y="546">gain_RegenTorqueDemand_1</text>
          <text x="996" y="694">gain_RegenTorqueDemand_2</text>
          <text x="1178" y="515">add_MotorDemand_1</text>
          <text x="1178" y="664">add_MotorDemand_2</text>
        </g>
        <g class="lb-dark">
          <text class="kval" x="923.500" y="395">k=750</text>
          <text class="kval" x="996.500" y="618">k=-43</text>
          <text class="kval" x="996.500" y="767">k=-43</text>
          <text x="798" y="522.500">demand</text>
          <text x="797" y="544">speed</text>
          <text x="796.500" y="568.500">SOC</text>
          <text x="833.500" y="526">brake</text>
          <text x="833.500" y="561">regen</text>
          <text class="kval" x="1168" y="529">+1</text><text class="kval" x="1168" y="562">+1</text>
          <text class="kval" x="1168" y="678">+1</text><text class="kval" x="1168" y="711">+1</text>
          <text x="1178" y="545.500">+</text><text x="1178" y="694">+</text>
        </g>
        <g class="lb-rot">
          <text transform="translate(580 281) rotate(-90)">driverBus</text>
          <text transform="translate(580 430) rotate(-90)">chassisBus</text>
          <text transform="translate(579 578.500) rotate(-90)">batteryBus</text>
          <text transform="translate(580 727) rotate(-90)">electricMotorBus_1</text>
          <text transform="translate(580 875.500) rotate(-90)">electricMotorBus_2</text>
          <text transform="translate(1307 429.500) rotate(-90)">brakesControlBus</text>
          <text transform="translate(1307 579) rotate(-90)">electricMotorControlBus_1</text>
          <text transform="translate(1306 734.500) rotate(-90)">batteryControlBus</text>
          <text transform="translate(1307 875) rotate(-90)">electricMotorControlBus_2</text>
        </g>
        <g>
          <rect x="1897.500" y="522.500" width="22" height="30" fill="#f4f4f4" stroke="#e2e2e2"/>
          <path d="M1900 543l2-3c-1-1-2-2-2-4 0-3 3-5 7-5s7 2 7 5-3 5-7 5c-2 0-4 0-5 0z" fill="#6a6a6a"/>
          <path d="M1917 975L1900 989l6 1 4 7z" fill="url(#gTip)"/>
        </g>
      </svg>
    </div>
  </main>

  <nav class="toolbar">
    <div class="tb tb-l">
      <svg class="ic w31"><use href="#t-cut"/></svg>
      <svg class="ic w28 ml11"><use href="#t-copy"/></svg>
      <svg class="ic w27 ml13"><use href="#t-paste"/></svg><i class="car ml7"></i>
      <svg class="ic w26 ml11"><use href="#t-undo"/></svg><i class="car ml7"></i>
      <i class="sep ml22"></i>
      <svg class="ic w27 ml13"><use href="#t-sync"/></svg><i class="car ml7"></i>
      <i class="sep ml23"></i>
      <svg class="ic w22 ml15"><use href="#t-share"/></svg>
    </div>
    <div class="tb tb-r">
      <div class="split ml9"><span class="split-main"><svg class="ic w30"><use href="#ex-fmu"/></svg></span><span class="split-drop"><i class="car blue"></i></span></div>
      <svg class="ic w26 ml9"><use href="#t-list"/></svg><i class="car ml8"></i>
      <svg class="ic w26 ml13"><use href="#t-pages"/></svg>
      <svg class="ic w24 ml14"><use href="#t-cwin"/></svg>
      <svg class="ic w29 ml15"><use href="#t-info"/></svg>
      <i class="sep ml22"></i>
      <svg class="ic w30 ml12"><use href="#t-libm"/></svg><i class="car ml3"></i>
      <svg class="ic w30 ml12"><use href="#t-libp"/></svg><i class="car ml3"></i>
      <svg class="ic w30 ml12"><use href="#t-libr"/></svg><i class="car ml3"></i>
      <i class="sep ml25"></i>
      <svg class="ic w28 ml10"><use href="#t-mech"/></svg><i class="car ml8"></i>
      <svg class="ic w28 ml10"><use href="#t-param"/></svg>
      <svg class="ic w30 ml11"><use href="#t-pipe"/></svg><i class="car ml6"></i>
      <span class="more ml15"><svg viewBox="0 0 18 18"><circle cx="9" cy="9" r="8" fill="#fff" stroke="#999"/><path d="M7 5l4 4-4 4" fill="none" stroke="#333" stroke-width="2"/></svg></span>
      <i class="sep ml9"></i>
      <span class="lbtn ml11">L</span><i class="car ml6"></i>
    </div>
  </nav>

  <div class="menu">
    <div class="mi"><span class="mi-ic"><svg><use href="#ex-mo"/></svg></span><span class="mi-t">Export to Modelica File</span></div>
    <div class="mi"><span class="mi-ic"><svg><use href="#ex-pub"/></svg></span><span class="mi-t">Publish to Multi-scale Component</span></div>
    <div class="mi hov"><span class="mi-ic"><svg><use href="#ex-fmu"/></svg></span><span class="mi-t">Export to FMU</span></div>
    <div class="mi"><span class="mi-ic"><svg><use href="#ex-c"/></svg></span><span class="mi-t">Export to C-Code</span></div>
  </div>

  <div class="tooltip">
    <div class="tt-h">Export to FMU</div>
    <div class="tt-b">Exports a model to an FMU file.</div>
    <div class="tt-f"><svg viewBox="0 0 16 16"><circle cx="8" cy="8" r="7.500" fill="#3a93c6" stroke="#8cc1de"/><path d="M5.500 6.300c0-3.200 5-3.200 5 0 0 1.800-2.500 1.800-2.500 3.500" fill="none" stroke="#fff" stroke-width="1.400"/><circle cx="8" cy="12" r="1" fill="#fff"/></svg>Press F1 for more help.</div>
  </div>

  <svg class="cursor" viewBox="0 0 13 21"><path d="M1 1v15l3.500-3.500 2.500 6 2.500-1-2.500-6h5z" fill="#fff" stroke="#111"/></svg>
</div>
</body>
</html>
```

FILE: styles.css
```css
* { box-sizing: border-box; }
html, body { margin: 0; padding: 0; background: #fff; }
body { width: 1920px; height: 1080px; overflow: hidden; font-family: "Noto Sans", sans-serif; }
i { display: block; font-style: normal; }
.defs { position: absolute; width: 0; height: 0; }
.app { position: relative; width: 1920px; height: 1080px; display: flex; flex-direction: column; overflow: hidden; }

/* top bar */
.topbar { flex: 0 0 45px; background: #005686; border-top: 1px solid #3f86ac; border-bottom: 1px solid #4a6a7d; display: flex; align-items: center; }
.left { flex: 0 0 757px; display: flex; align-items: center; padding-left: 14px; }
.logo { width: 34px; height: 30px; }
.brand { margin-left: 97px; display: flex; align-items: center; font-family: Lato, sans-serif; font-size: 15.500px; color: #b6d1e1; letter-spacing: -.25px; white-space: nowrap; transform: scaleX(.89); transform-origin: left center; }
.brand b { color: #fff; font-weight: 700; }
.bar { width: 1px; height: 17px; background: #cfe0ea; margin: 0 6px 0 5px; }
.app-name { margin-left: 6px; letter-spacing: -.1px; }
.search { flex: 0 0 350px; height: 25px; background: #fff; display: flex; align-items: center; padding: 0 10px; }
.ph { font-size: 10px; color: #9a9a9a; font-family: "Open Sans", sans-serif; }
.mag { width: 16px; height: 16px; margin-left: auto; }
.tag { width: 24px; height: 24px; margin-left: 10px; }
.right { margin-left: auto; display: flex; align-items: center; padding-right: 10px; }
.user { font-family: Lato, sans-serif; font-size: 11.100px; line-height: 20px; text-align: right; color: #c9dce7; width: 120px; letter-spacing: -.1px; }
.chev { width: 12px; height: 8px; margin-left: 4px; margin-top: 18px; }
.avatar { width: 32px; height: 26px; margin-left: 13px; }
.ti { width: 22px; height: 22px; }
.plus { width: 21px; height: 21px; margin-left: 12px; }
.share { margin-left: 22.500px; }
.help { width: 24px; height: 24px; margin-left: 22px; }

.compass { position: absolute; left: 59px; top: 0; width: 76px; height: 76px; z-index: 3; }
.ct { font-family: "Liberation Sans", sans-serif; font-size: 7px; font-weight: 700; fill: #e3ebf0; text-anchor: middle; }

/* sub bar */
.subbar { flex: 0 0 32px; display: flex; align-items: stretch; background: repeating-conic-gradient(#f6f6f6 0 25%, #f0f0f0 0 50%) 0 0 / 3px 3px; border-bottom: 1px solid #dcdcdc; }
.tab { margin-left: 142px; width: 178px; border-bottom: 2px solid #005686; display: flex; align-items: center; padding-left: 3px; }
.tab-text { font-family: "Open Sans", sans-serif; font-weight: 700; font-style: italic; font-size: 13.300px; color: #555; white-space: nowrap; overflow: hidden; width: 173px; -webkit-mask-image: linear-gradient(to right, #000 88%, rgba(0,0,0,.15)); mask-image: linear-gradient(to right, #000 88%, rgba(0,0,0,.15)); }
.tab-add { margin-left: 9px; font-size: 20px; line-height: 29px; color: #bbb; }
.collapse { margin-left: auto; margin-right: 10px; margin-top: 3px; width: 24px; height: 25px; border: 1px solid #2b7fa8; border-radius: 2px; background: #fbfbfb; display: flex; align-items: center; justify-content: center; }
.collapse svg { width: 20px; height: 20px; }

/* workspace */
.work { flex: 1; display: flex; align-items: flex-start; min-height: 0; }
.sidebar { flex: 0 0 311px; height: 919px; display: flex; border-bottom: 1px solid #a8a8a8; padding-top: 4px; }
.rail { flex: 0 0 27px; display: flex; flex-direction: column; padding: 21px 0 0 2px; }
.railtabs { display: flex; flex-direction: column; background: #b5b5b5; border-radius: 3px 0 0 3px; }
.rt { height: 25px; display: flex; align-items: center; justify-content: center; }
.rt svg { width: 17px; height: 17px; }
.rt.on { height: 24px; background: #ececec; border: 1px solid #999; border-right: 0; border-radius: 3px 0 0 3px; margin-top: 0; }
.collapse-left { width: 14px; height: 26px; margin: 325px 0 0 4px; }

.panel { flex: 0 0 284px; background: #f0f0f0; border: 1px solid #b2b2b2; border-radius: 0 3px 3px 0; display: flex; flex-direction: column; }
.phead { flex: 0 0 29px; display: flex; align-items: flex-start; padding-left: 7px; }
.pcheck { width: 15px; height: 15px; margin-top: 4px; }
.ptitle { margin-left: 3px; font-size: 12.100px; color: #555; line-height: 22px; }
.pgrip { margin-left: auto; margin-right: 1px; margin-top: 1px; width: 81px; height: 22px; background: repeating-conic-gradient(#c6c6c6 0 25%, #d6d6d6 0 50%) 0 0 / 2px 2px; }
.psearch { flex: 0 0 18px; display: flex; align-items: center; padding-left: 6px; }
.pfield { width: 248px; height: 18px; background: #dbd7d0; }
.pmag { width: 14px; height: 14px; margin-left: 3px; }
.pbody { flex: 0 0 847px; height: 847px; min-height: 0; margin-top: -.5px; display: flex; padding-left: 5px; overflow: hidden; }
.vscroll { flex: 0 0 13px; margin-top: 2px; display: flex; flex-direction: column; height: 845px; }
.sb-btn { flex: 0 0 11px; height: 11px; background: #e6e6e6; border: 1px solid #c8c8c8; border-radius: 2px; display: flex; align-items: center; justify-content: center; }
.sb-btn b { width: 0; height: 0; border: 3px solid transparent; }
.up { border-bottom-color: #999 !important; border-top: 0 !important; }
.dn { border-top-color: #999 !important; border-bottom: 0 !important; }
.lf { border-right-color: #999 !important; border-left: 0 !important; }
.rg { border-left-color: #999 !important; border-right: 0 !important; }
.sb-thumb { background: #d9d9d9; border: 1px solid #c6c6c6; border-radius: 2px; }
.vscroll .sb-thumb { flex: 0 0 596px; margin-top: 2px; }
.sb-fill { flex: 1; background: #ececec; }

/* tree */
.tree { flex: 1; width: 258px; margin-right: 6px; overflow: hidden; font-family: "Noto Sans", sans-serif; }
.row { height: 27.700px; margin-left: -3px; display: flex; align-items: center; white-space: nowrap; width: 262px; }
.g, .x { flex: 0 0 23px; height: 100%; position: relative; background-repeat: no-repeat; }
.g { background-image: linear-gradient(#8c8c8c, #8c8c8c); background-size: 1px 100%; background-position: 11px 0; }
.x { background-image: linear-gradient(#8c8c8c, #8c8c8c), linear-gradient(#8c8c8c, #8c8c8c); background-size: 1px 100%, 100% 1px; background-position: 11px 0, 11px 50%; }
.x.p { background-image: linear-gradient(#111, #111), linear-gradient(#111, #111), linear-gradient(#e8e8e8, #b0b0b0), linear-gradient(#858585, #858585), linear-gradient(#8c8c8c, #8c8c8c), linear-gradient(#8c8c8c, #8c8c8c); background-size: 1px 7px, 7px 1px, 10px 10px, 12px 12px, 1px 100%, 100% 1px; background-position: 11px 50%, 8px 50%, 6px 50%, 5px 50%, 11px 0, 11px 50%; }
.x.m { background-image: linear-gradient(#111, #111), linear-gradient(#e8e8e8, #b0b0b0), linear-gradient(#858585, #858585), linear-gradient(#8c8c8c, #8c8c8c), linear-gradient(#8c8c8c, #8c8c8c); background-size: 7px 1px, 10px 10px, 12px 12px, 1px 100%, 100% 1px; background-position: 8px 50%, 6px 50%, 5px 50%, 11px 0, 11px 50%; }
.x.last { background-size: 1px 7px, 7px 1px, 10px 10px, 12px 12px, 1px 50%, 100% 1px; }
.x::after { content: ""; position: absolute; left: 17px; right: -2px; top: 50%; height: 1px; background: #8c8c8c; }
.ico { flex: 0 0 23px; width: 23px; height: 23px; margin-left: -2px; }
.lock { flex: 0 0 9px; width: 9px; height: 12px; align-self: flex-start; margin-top: 4px; }
.t { margin-left: 6px; font-size: 13px; line-height: 23px; color: #111; }
.t.sel { flex: 1; margin-left: 5px; padding-left: 1px; background: #0a63f0; color: #fff; border-bottom: 1px solid #111; overflow: hidden; height: 24px; margin-right: 0; }
.navs { margin-left: auto; display: flex; align-items: center; gap: 7px; padding-right: 7px; }
.navs svg { width: 12px; height: 12px; }

.hscroll { flex: 0 0 13px; margin: 1px 6px 0 18px; display: flex; }
.hscroll .sb-thumb { flex: 0 0 187px; margin-left: 1px; }
.hscroll .sb-btn { flex: 0 0 12px; height: 13px; }

/* canvas */
.canvas { flex: 1; height: 1003px; }
.diagram { display: block; width: 1609px; height: 1003px; }
.fr-grey { fill: none; stroke: #8f8f8f; stroke-width: 2.400; }
.fr-yel { fill: none; stroke: #ffc52f; stroke-width: 2.500; }
.wire path { fill: none; stroke: #2b3a9d; stroke-width: 1.500; }
.block * { fill: #fff; stroke: #2a3596; stroke-width: 1.300; }
.block path:nth-last-child(-n+2) { fill: none; }
.block .blk { stroke: #333; }
.arrow path { fill: #00007f; }
.hollow path { fill: #fff; stroke: #2a3596; stroke-width: 1.200; }
.diagram text { font-family: "Liberation Sans", sans-serif; font-size: 11.600px; }
.diagram text.kval { letter-spacing: .5px; font-size: 11.800px; }
.lb-blue text { fill: #1c1cff; text-anchor: middle; }
.lb-dark text { fill: #222; text-anchor: middle; }
.lb-rot text { fill: #222; text-anchor: middle; }
.fmu { font: 700 7px "Liberation Sans", sans-serif; fill: #222; }
.cc { font: italic 15px "Liberation Serif", serif; fill: #222; }
.cw { font: 700 12px "Liberation Sans", sans-serif; fill: #333; }

/* bottom toolbar */
.toolbar { position: absolute; left: 435px; bottom: 0; width: 1051px; height: 50px; display: flex; border: 2px solid #d6d6d6; border-bottom: 0; border-radius: 4px 4px 0 0; }
.tb { display: flex; align-items: center; height: 100%; }
.tb-l { flex: 0 0 343px; background: #fff; padding-left: 9px; }
.tb-r { flex: 1; background: #e6e6e6; border-left: 1px solid #cfcfcf; }
.ic { height: 30px; flex: none; }
.w22 { width: 22px; } .w24 { width: 24px; } .w26 { width: 26px; } .w27 { width: 27px; } .w28 { width: 28px; } .w29 { width: 29px; } .w30 { width: 30px; } .w31 { width: 31px; }
.car { width: 0; height: 0; flex: none; border-left: 4px solid transparent; border-right: 4px solid transparent; border-top: 4px solid #3c3c3c; }
.car.blue { border-top-color: #1e86c4; }
.sep { width: 1px; height: 30px; background: #a8a8a8; flex: none; }
.ml3 { margin-left: 3px; } .ml6 { margin-left: 6px; } .ml7 { margin-left: 7px; } .ml8 { margin-left: 8px; } .ml9 { margin-left: 9px; } .ml10 { margin-left: 10px; } .ml11 { margin-left: 11px; } .ml12 { margin-left: 12px; } .ml13 { margin-left: 13px; } .ml14 { margin-left: 14px; } .ml15 { margin-left: 15px; } .ml22 { margin-left: 22px; } .ml23 { margin-left: 23px; } .ml25 { margin-left: 25px; }
.split { display: flex; height: 37px; flex: none; }
.split-main { width: 36px; border: 1px solid #555; border-right: 0; border-radius: 3px 0 0 3px; display: flex; align-items: center; justify-content: center; background: #ececec; }
.split-drop { width: 12px; border: 1px solid #3a9ad2; border-radius: 0 3px 3px 0; display: flex; align-items: center; justify-content: center; }
.more { width: 18px; height: 18px; flex: none; display: block; }
.more svg { display: block; width: 18px; height: 18px; }
.lbtn { width: 30px; height: 30px; flex: none; border: 1.500px solid #444; border-radius: 50%; background: #fff; font: italic 22px/27px "Liberation Serif", serif; color: #222; text-align: center; }

/* export menu */
.menu { position: absolute; left: 788px; top: 876px; width: 227px; height: 156px; padding: 4px 6px; background: #e4e4e4; border: 1px solid #8a8a8a; box-shadow: 2px 3px 3px rgba(0,0,0,.45); display: flex; flex-direction: column; background-image: linear-gradient(#8f8f8f, #8f8f8f); background-repeat: no-repeat; background-size: 1px 148px; background-position: 43px 4px; z-index: 4; }
.mi { flex: 0 0 36.800px; display: flex; align-items: center; border: 1px solid transparent; border-radius: 2px; }
.mi.hov { background: #ececec; border-color: #bdbdbd; }
.mi-ic { flex: 0 0 37px; display: flex; align-items: center; justify-content: center; }
.mi-ic svg { width: 30px; height: 32px; display: block; }
.mi-t { margin-left: 5px; font-family: "Noto Sans", sans-serif; font-size: 10.400px; color: #222; white-space: nowrap; }

.tooltip { position: absolute; left: 1010px; top: 954px; width: 175px; height: 69px; background: #e9e9e9; border: 2px solid #9a9a9a; border-top-width: 1px; border-left-width: 1px; font-family: "Noto Sans", sans-serif; font-size: 11.200px; color: #666; z-index: 5; display: flex; flex-direction: column; }
.tt-h { flex: 0 0 20px; background: #d2d2d2; font-weight: 700; color: #444; padding-left: 4px; line-height: 20px; }
.tt-b { flex: 0 0 26px; padding-left: 4px; line-height: 26px; }
.tt-f { flex: 1; background: #f1f1f1; display: flex; align-items: center; padding-left: 4px; gap: 4px; }
.tt-f svg { width: 16px; height: 16px; }
.cursor { position: absolute; left: 950px; top: 968px; width: 13px; height: 21px; z-index: 6; }
```
